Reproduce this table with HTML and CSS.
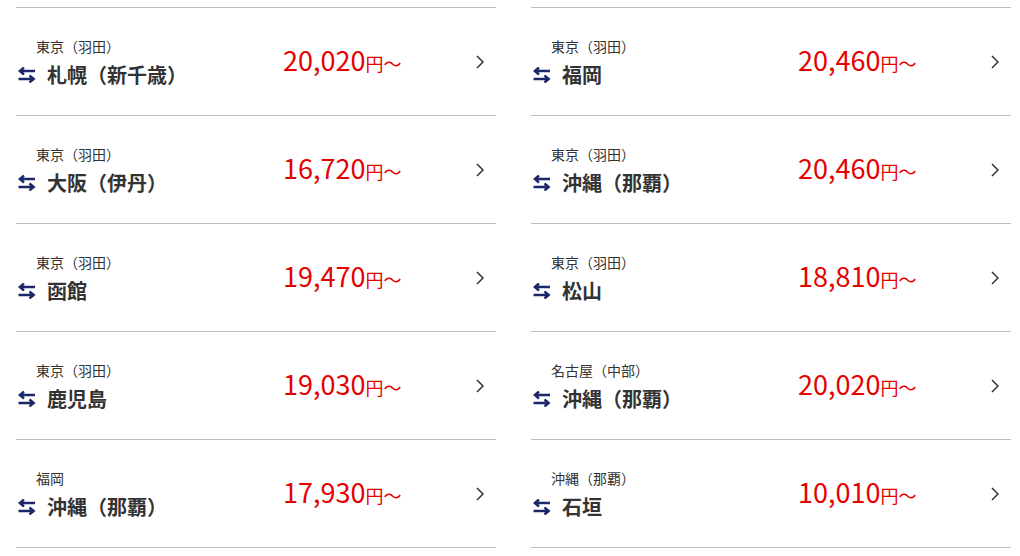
FILE: index.html
```html
<!DOCTYPE html>
<html lang="ja">
<head>
<meta charset="utf-8">
<link rel="stylesheet" href="styles.css">
</head>
<body>
<div class="wrap">
  <div class="col">
    <a class="row"><div class="route"><div class="from">東京（羽田）</div><div class="to"><svg class="ico" width="18" height="16" viewBox="0 0 18 16"><path d="M1.5 4H17M6 0.5L1.8 4L6 7.5M0.5 12H16M11.5 8.5L15.7 12L11.5 15.5"/></svg><span>札幌（新千歳）</span></div></div><div class="price"><span class="num">20,020</span><span class="yen">円〜</span></div><svg class="chev" width="8" height="14" viewBox="0 0 8 14"><path d="M1 1L7 7L1 13"/></svg></a>
    <a class="row"><div class="route"><div class="from">東京（羽田）</div><div class="to"><svg class="ico" width="18" height="16" viewBox="0 0 18 16"><path d="M1.5 4H17M6 0.5L1.8 4L6 7.5M0.5 12H16M11.5 8.5L15.7 12L11.5 15.5"/></svg><span>大阪（伊丹）</span></div></div><div class="price"><span class="num">16,720</span><span class="yen">円〜</span></div><svg class="chev" width="8" height="14" viewBox="0 0 8 14"><path d="M1 1L7 7L1 13"/></svg></a>
    <a class="row"><div class="route"><div class="from">東京（羽田）</div><div class="to"><svg class="ico" width="18" height="16" viewBox="0 0 18 16"><path d="M1.5 4H17M6 0.5L1.8 4L6 7.5M0.5 12H16M11.5 8.5L15.7 12L11.5 15.5"/></svg><span>函館</span></div></div><div class="price"><span class="num">19,470</span><span class="yen">円〜</span></div><svg class="chev" width="8" height="14" viewBox="0 0 8 14"><path d="M1 1L7 7L1 13"/></svg></a>
    <a class="row"><div class="route"><div class="from">東京（羽田）</div><div class="to"><svg class="ico" width="18" height="16" viewBox="0 0 18 16"><path d="M1.5 4H17M6 0.5L1.8 4L6 7.5M0.5 12H16M11.5 8.5L15.7 12L11.5 15.5"/></svg><span>鹿児島</span></div></div><div class="price"><span class="num">19,030</span><span class="yen">円〜</span></div><svg class="chev" width="8" height="14" viewBox="0 0 8 14"><path d="M1 1L7 7L1 13"/></svg></a>
    <a class="row"><div class="route"><div class="from">福岡</div><div class="to"><svg class="ico" width="18" height="16" viewBox="0 0 18 16"><path d="M1.5 4H17M6 0.5L1.8 4L6 7.5M0.5 12H16M11.5 8.5L15.7 12L11.5 15.5"/></svg><span>沖縄（那覇）</span></div></div><div class="price"><span class="num">17,930</span><span class="yen">円〜</span></div><svg class="chev" width="8" height="14" viewBox="0 0 8 14"><path d="M1 1L7 7L1 13"/></svg></a>
  </div>
  <div class="col">
    <a class="row"><div class="route"><div class="from">東京（羽田）</div><div class="to"><svg class="ico" width="18" height="16" viewBox="0 0 18 16"><path d="M1.5 4H17M6 0.5L1.8 4L6 7.5M0.5 12H16M11.5 8.5L15.7 12L11.5 15.5"/></svg><span>福岡</span></div></div><div class="price"><span class="num">20,460</span><span class="yen">円〜</span></div><svg class="chev" width="8" height="14" viewBox="0 0 8 14"><path d="M1 1L7 7L1 13"/></svg></a>
    <a class="row"><div class="route"><div class="from">東京（羽田）</div><div class="to"><svg class="ico" width="18" height="16" viewBox="0 0 18 16"><path d="M1.5 4H17M6 0.5L1.8 4L6 7.5M0.5 12H16M11.5 8.5L15.7 12L11.5 15.5"/></svg><span>沖縄（那覇）</span></div></div><div class="price"><span class="num">20,460</span><span class="yen">円〜</span></div><svg class="chev" width="8" height="14" viewBox="0 0 8 14"><path d="M1 1L7 7L1 13"/></svg></a>
    <a class="row"><div class="route"><div class="from">東京（羽田）</div><div class="to"><svg class="ico" width="18" height="16" viewBox="0 0 18 16"><path d="M1.5 4H17M6 0.5L1.8 4L6 7.5M0.5 12H16M11.5 8.5L15.7 12L11.5 15.5"/></svg><span>松山</span></div></div><div class="price"><span class="num">18,810</span><span class="yen">円〜</span></div><svg class="chev" width="8" height="14" viewBox="0 0 8 14"><path d="M1 1L7 7L1 13"/></svg></a>
    <a class="row"><div class="route"><div class="from">名古屋（中部）</div><div class="to"><svg class="ico" width="18" height="16" viewBox="0 0 18 16"><path d="M1.5 4H17M6 0.5L1.8 4L6 7.5M0.5 12H16M11.5 8.5L15.7 12L11.5 15.5"/></svg><span>沖縄（那覇）</span></div></div><div class="price"><span class="num">20,020</span><span class="yen">円〜</span></div><svg class="chev" width="8" height="14" viewBox="0 0 8 14"><path d="M1 1L7 7L1 13"/></svg></a>
    <a class="row"><div class="route"><div class="from">沖縄（那覇）</div><div class="to"><svg class="ico" width="18" height="16" viewBox="0 0 18 16"><path d="M1.5 4H17M6 0.5L1.8 4L6 7.5M0.5 12H16M11.5 8.5L15.7 12L11.5 15.5"/></svg><span>石垣</span></div></div><div class="price"><span class="num">10,010</span><span class="yen">円〜</span></div><svg class="chev" width="8" height="14" viewBox="0 0 8 14"><path d="M1 1L7 7L1 13"/></svg></a>
  </div>
</div>
</body>
</html>
```
FILE: styles.css
```css
html, body {
  margin: 0;
  padding: 0;
  background: #fff;
}
body {
  font-family: "Noto Sans CJK JP", "Noto Sans", sans-serif;
  color: #333;
}
.wrap {
  display: grid;
  grid-template-columns: 480px 480px;
  column-gap: 35px;
  padding: 7px 0 0 16px;
}
.col {
  border-top: 1px solid #bdbdbd;
}
.row {
  display: flex;
  align-items: center;
  height: 107px;
  border-bottom: 1px solid #bdbdbd;
  padding-left: 2px;
  padding-right: 12px;
  text-decoration: none;
  color: inherit;
}
.route {
  width: 265px;
  flex: none;
  margin-top: 2px;
}
.from {
  font-size: 14px;
  line-height: 20px;
  margin-left: 18px;
  color: #333;
}
.to {
  display: flex;
  align-items: center;
  margin-top: 5px;
  height: 28px;
  font-size: 20px;
  font-weight: bold;
  line-height: 28px;
  color: #333;
}
.ico {
  flex: none;
  margin-right: 11px;
  fill: none;
  stroke: #1b2766;
  stroke-width: 2.4;
}
.price {
  flex: 1;
  color: #e60000;
  white-space: nowrap;
  margin-top: -5px;
}
.num {
  font-size: 27px;
}
.yen {
  font-size: 18px;
}
.chev {
  flex: none;
  fill: none;
  stroke: #333;
  stroke-width: 1.5;
}
```
